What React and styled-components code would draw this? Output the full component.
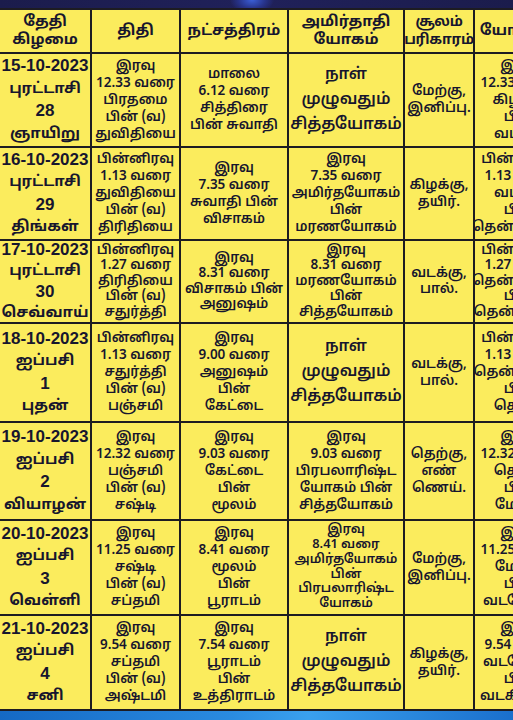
import React from "react";
import styled, { createGlobalStyle } from "styled-components";

const Global = createGlobalStyle`
  html, body { margin: 0; padding: 0; background: #fbec5d; }
  body { width: 513px; height: 720px; overflow: hidden; }
  #root { width: 513px; height: 720px; }
`;

const Page = styled.div`
  width: 513px;
  height: 720px;
  overflow: hidden;
  display: flex;
  flex-direction: column;
  background: #fbec5d;
  font-family: "Noto Sans Tamil", "Lohit Tamil", "Noto Sans", "Liberation Sans", sans-serif;
  color: #17162e;
`;

const TopBar = styled.div`
  height: 8px;
  flex: none;
  background: radial-gradient(ellipse 22px 14px at 252px 0px, #3b5fd6 0%, #27338a 60%, transparent 100%),
    linear-gradient(90deg, #1b1c4c, #20215a 50%, #1b1c4c);
`;

const Grid = styled.div`
  flex: none;
  display: grid;
  grid-template-columns: 90px 87px 106px 114px 68px 90px;
  grid-template-rows: 42px 92px 91px 81px 97px 96px 93px 93px;
  gap: 2px;
  padding: 2px 0;
  background: #1d1c22;
  width: 565px;
`;

const Cell = styled.div`
  background: #fbec5d;
  display: flex;
  flex-direction: column;
  align-items: center;
  justify-content: center;
  text-align: center;
  white-space: nowrap;
  font-size: ${(p) => (p.$big ? "16px" : p.$fs ? `${p.$fs}px` : "13.5px")};
  line-height: ${(p) => (p.$big ? "25px" : `${p.$lh || 17}px`)};
  font-weight: 600;
  overflow: hidden;
`;

const HeadCell = styled(Cell)`
  font-size: ${(p) => (p.$tight ? "14px" : "15px")};
  line-height: 18px;
  font-weight: 700;
  padding-top: 1px;
  letter-spacing: ${(p) => (p.$tight ? "-0.3px" : "0")};
`;

const DateCell = styled(Cell)`
  font-size: 15px;
  line-height: ${(p) => p.$lh || 21.5}px;
  font-weight: 700;
`;

const Num = styled.span`
  font-family: "Liberation Sans", Arial, sans-serif;
  font-size: 17px;
  font-weight: 700;
`;

const BottomBar = styled.div`
  flex: 1;
  background: linear-gradient(90deg, #1569c4, #2a8be0 45%, #3aa0ee 60%, #1a6fcc);
`;

const headers = [
  ["தேதி", "கிழமை"],
  ["திதி"],
  ["நட்சத்திரம்"],
  ["அமிர்தாதி", "யோகம்"],
  ["சூலம்", "பரிகாரம்"],
  ["யோகினி"],
];

const rows = [
  {
    date: ["15-10-2023", "புரட்டாசி", "28", "ஞாயிறு"],
    tithi: ["இரவு", "12.33 வரை", "பிரதமை", "பின் (வ)", "துவிதியை"],
    star: ["மாலை", "6.12 வரை", "சித்திரை", "பின் சுவாதி"],
    yoga: ["நாள்", "முழுவதும்", "சித்தயோகம்"],
    big: true,
    soolam: ["மேற்கு,", "இனிப்பு."],
    yogini: ["இரவு", "12.33 வரை", "கிழக்கு", "பின்", "வடக்கு"],
  },
  {
    date: ["16-10-2023", "புரட்டாசி", "29", "திங்கள்"],
    tithi: ["பின்னிரவு", "1.13 வரை", "துவிதியை", "பின் (வ)", "திரிதியை"],
    star: ["இரவு", "7.35 வரை", "சுவாதி பின்", "விசாகம்"],
    yoga: ["இரவு", "7.35 வரை", "அமிர்தயோகம்", "பின்", "மரணயோகம்"],
    soolam: ["கிழக்கு,", "தயிர்."],
    yogini: ["பின்னிரவு", "1.13 வரை", "வடக்கு", "பின்", "தென்கிழக்கு"],
  },
  {
    date: ["17-10-2023", "புரட்டாசி", "30", "செவ்வாய்"],
    dateLh: 20,
    lh: 15.5,
    tithi: ["பின்னிரவு", "1.27 வரை", "திரிதியை", "பின் (வ)", "சதுர்த்தி"],
    star: ["இரவு", "8.31 வரை", "விசாகம் பின்", "அனுஷம்"],
    yoga: ["இரவு", "8.31 வரை", "மரணயோகம்", "பின்", "சித்தயோகம்"],
    soolam: ["வடக்கு,", "பால்."],
    yogini: ["பின்னிரவு", "1.27 வரை", "தென்கிழக்கு", "பின்", "தென்மேற்கு"],
  },
  {
    date: ["18-10-2023", "ஐப்பசி", "1", "புதன்"],
    tithi: ["பின்னிரவு", "1.13 வரை", "சதுர்த்தி", "பின் (வ)", "பஞ்சமி"],
    star: ["இரவு", "9.00 வரை", "அனுஷம்", "பின்", "கேட்டை"],
    yoga: ["நாள்", "முழுவதும்", "சித்தயோகம்"],
    big: true,
    soolam: ["வடக்கு,", "பால்."],
    yogini: ["பின்னிரவு", "1.13 வரை", "தென்மேற்கு", "பின்", "தெற்கு"],
  },
  {
    date: ["19-10-2023", "ஐப்பசி", "2", "வியாழன்"],
    tithi: ["இரவு", "12.32 வரை", "பஞ்சமி", "பின் (வ)", "சஷ்டி"],
    star: ["இரவு", "9.03 வரை", "கேட்டை", "பின்", "மூலம்"],
    yoga: ["இரவு", "9.03 வரை", "பிரபலாரிஷ்ட", "யோகம் பின்", "சித்தயோகம்"],
    soolam: ["தெற்கு,", "எண்", "ணெய்."],
    yogini: ["இரவு", "12.32 வரை", "தெற்கு", "பின்", "மேற்கு"],
  },
  {
    date: ["20-10-2023", "ஐப்பசி", "3", "வெள்ளி"],
    tithi: ["இரவு", "11.25 வரை", "சஷ்டி", "பின் (வ)", "சப்தமி"],
    star: ["இரவு", "8.41 வரை", "மூலம்", "பின்", "பூராடம்"],
    yoga: ["இரவு", "8.41 வரை", "அமிர்தயோகம்", "பின்", "பிரபலாரிஷ்ட", "யோகம்"],
    yogaLh: 14.8,
    yogaFs: 12.8,
    soolam: ["மேற்கு,", "இனிப்பு."],
    yogini: ["இரவு", "11.25 வரை", "மேற்கு", "பின்", "வடமேற்கு"],
  },
  {
    date: ["21-10-2023", "ஐப்பசி", "4", "சனி"],
    tithi: ["இரவு", "9.54 வரை", "சப்தமி", "பின் (வ)", "அஷ்டமி"],
    star: ["இரவு", "7.54 வரை", "பூராடம்", "பின்", "உத்திராடம்"],
    yoga: ["நாள்", "முழுவதும்", "சித்தயோகம்"],
    big: true,
    soolam: ["கிழக்கு,", "தயிர்."],
    yogini: ["இரவு", "9.54 வரை", "வடமேற்கு", "பின்", "வடகிழக்கு"],
  },
];

const isNum = (s) => /^[0-9-]+$/.test(s);

const Lines = ({ items }) =>
  items.map((t, i) => <div key={i}>{isNum(t) ? <Num>{t}</Num> : t}</div>);

export default function App() {
  return (
    <Page>
      <Global />
      <TopBar />
      <Grid>
        {headers.map((h, i) => (
          <HeadCell key={i} $tight={i === 4}>
            <Lines items={h} />
          </HeadCell>
        ))}
        {rows.map((r, i) => (
          <React.Fragment key={i}>
            <DateCell $lh={r.dateLh}>
              <Lines items={r.date} />
            </DateCell>
            <Cell $lh={r.lh}>
              <Lines items={r.tithi} />
            </Cell>
            <Cell $lh={r.lh}>
              <Lines items={r.star} />
            </Cell>
            <Cell $big={r.big} $lh={r.yogaLh || r.lh} $fs={r.yogaFs}>
              <Lines items={r.yoga} />
            </Cell>
            <Cell $lh={r.lh}>
              <Lines items={r.soolam} />
            </Cell>
            <Cell $lh={r.lh}>
              <Lines items={r.yogini} />
            </Cell>
          </React.Fragment>
        ))}
      </Grid>
      <BottomBar />
    </Page>
  );
}
